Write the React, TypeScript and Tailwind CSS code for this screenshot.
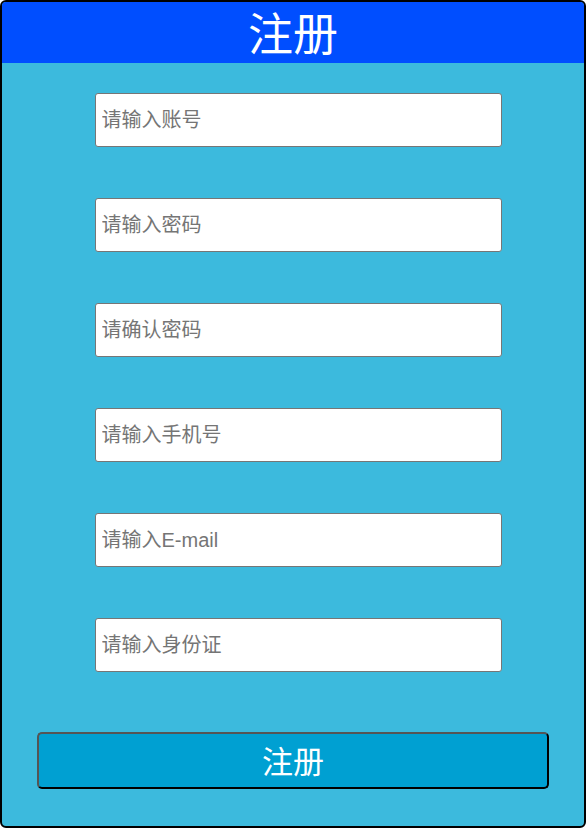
const fields = [
  "请输入账号",
  "请输入密码",
  "请确认密码",
  "请输入手机号",
  "请输入E-mail",
  "请输入身份证",
];

const App = () => {
  return (
    <div
      className="w-[586px] h-[828px] border-2 border-black rounded-[6px] overflow-hidden bg-[#3cbadd] flex flex-col"
      style={{ fontFamily: '"Liberation Sans", "Noto Sans CJK SC", sans-serif' }}
    >
      <div className="h-[61px] bg-[#004eff] flex items-center justify-center pt-[5px] text-white text-[45px] leading-none">
        注册
      </div>
      <div className="flex flex-col items-center pt-[30px] gap-[51px] pl-[10px]">
        {fields.map((f) => (
          <input
            key={f}
            placeholder={f}
            className="w-[407px] h-[54px] bg-white border border-[#767676] rounded-[3px] px-[6px] text-[20px] text-black placeholder:text-[#757575] outline-none"
          />
        ))}
      </div>
      <div className="pt-[60px] pl-[35px]">
        <button className="w-[512px] h-[57px] bg-[#00a0d2] border-2 border-t-[#555555] border-l-[#555555] border-r-black border-b-black rounded-[5px] pt-[3px] text-white text-[31px] leading-none">
          注册
        </button>
      </div>
    </div>
  );
};

export default App;
